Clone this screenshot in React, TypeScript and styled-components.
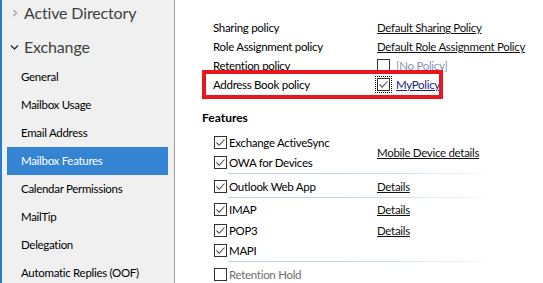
import React from 'react'
import styled, { createGlobalStyle } from 'styled-components'

const GlobalStyle = createGlobalStyle`
  html, body {
    margin: 0;
    padding: 0;
    background: #ffffff;
  }
  body {
    font-family: Lato, 'Noto Sans', sans-serif;
    font-size: 11.5px;
    letter-spacing: -0.3px;
    color: #000000;
  }
`

const navItems = [
  'General',
  'Mailbox Usage',
  'Email Address',
  'Mailbox Features',
  'Calendar Permissions',
  'MailTip',
  'Delegation',
  'Automatic Replies (OOF)'
]

const policies = [
  { label: 'Sharing policy', value: 'Default Sharing Policy', kind: 'link' },
  { label: 'Role Assignment policy', value: 'Default Role Assignment Policy', kind: 'link' },
  { label: 'Retention policy', value: '[No Policy]', kind: 'none' },
  { label: 'Address Book policy', value: 'MyPolicy', kind: 'selected' }
]

type Feature = { name: string; checked: boolean; link?: string }

const featureGroups: { items: Feature[]; link?: string; divider: boolean }[] = [
  {
    items: [
      { name: 'Exchange ActiveSync', checked: true },
      { name: 'OWA for Devices', checked: true }
    ],
    link: 'Mobile Device details',
    divider: true
  },
  {
    items: [{ name: 'Outlook Web App', checked: true, link: 'Details' }],
    divider: true
  },
  {
    items: [
      { name: 'IMAP', checked: true, link: 'Details' },
      { name: 'POP3', checked: true, link: 'Details' },
      { name: 'MAPI', checked: true }
    ],
    divider: true
  },
  {
    items: [{ name: 'Retention Hold', checked: false }],
    divider: false
  }
]

const CheckMark = () => (
  <svg width="11" height="11" viewBox="0 0 11 11">
    <path d="M1.5 5.5 L4.2 8.2 L9.5 2.5" fill="none" stroke="#555555" strokeWidth="1.1" />
  </svg>
)

const ChevronRight = () => (
  <svg width="8" height="8" viewBox="0 0 8 8">
    <path d="M2.5 1 L5.5 4 L2.5 7" fill="none" stroke="#a8a8a8" strokeWidth="1.4" />
  </svg>
)

const ChevronDown = () => (
  <svg width="9" height="8" viewBox="0 0 9 8">
    <path d="M1 2.5 L4.5 6 L8 2.5" fill="none" stroke="#333333" strokeWidth="1.4" />
  </svg>
)

export default function App() {
  return (
    <>
      <GlobalStyle />
      <Window>
        <Sidebar>
          <SectionHeader>
            <ChevronSlot>
              <ChevronRight />
            </ChevronSlot>
            <SectionTitle>Active Directory</SectionTitle>
          </SectionHeader>
          <SectionHeader>
            <ChevronSlot>
              <ChevronDown />
            </ChevronSlot>
            <SectionTitle>Exchange</SectionTitle>
          </SectionHeader>
          <NavList>
            {navItems.map((item) => (
              <NavItem key={item} $active={item === 'Mailbox Features'}>
                {item}
              </NavItem>
            ))}
          </NavList>
        </Sidebar>
        <Content>
          <PolicyTable>
            {policies.map((policy) => (
              <PolicyRow key={policy.label} $marked={policy.kind === 'selected'}>
                <PolicyLabel>{policy.label}</PolicyLabel>
                <PolicyValue>
                  {policy.kind === 'link' && <Link>{policy.value}</Link>}
                  {policy.kind === 'none' && (
                    <>
                      <Checkbox />
                      <Placeholder>{policy.value}</Placeholder>
                    </>
                  )}
                  {policy.kind === 'selected' && (
                    <>
                      <FocusRing>
                        <Checkbox>
                          <CheckMark />
                        </Checkbox>
                      </FocusRing>
                      <Link $visited>{policy.value}</Link>
                    </>
                  )}
                </PolicyValue>
              </PolicyRow>
            ))}
          </PolicyTable>

          <Heading>Features</Heading>

          <FeatureList>
            {featureGroups.map((group, gi) => (
              <FeatureGroup key={gi} $divider={group.divider}>
                <GroupItems>
                  {group.items.map((feature) => (
                    <FeatureRow key={feature.name}>
                      <FeatureName $disabled={!feature.checked}>
                        <Checkbox>{feature.checked && <CheckMark />}</Checkbox>
                        <span>{feature.name}</span>
                      </FeatureName>
                      {feature.link && <Link>{feature.link}</Link>}
                    </FeatureRow>
                  ))}
                </GroupItems>
                {group.link && (
                  <GroupLink>
                    <Link>{group.link}</Link>
                  </GroupLink>
                )}
              </FeatureGroup>
            ))}
          </FeatureList>
        </Content>
      </Window>
    </>
  )
}

const Window = styled.div`
  display: flex;
  width: 543px;
  height: 283px;
  overflow: hidden;
`

const Sidebar = styled.nav`
  flex: 0 0 172px;
  background: #f0f0f0;
  border-left: 2px solid #2b7bd4;
  border-right: 1px solid #a0a0a0;
  box-sizing: content-box;
  display: flex;
  flex-direction: column;
  margin-top: -5px;
  height: 288px;
`

const SectionHeader = styled.div`
  display: flex;
  align-items: center;
  height: 34px;
  flex-shrink: 0;
`

const ChevronSlot = styled.span`
  display: flex;
  justify-content: center;
  width: 9px;
  margin: 1px 5px 0 8px;
`

const SectionTitle = styled.span`
  font-size: 16px;
  letter-spacing: -0.15px;
  color: #404040;
`

const NavList = styled.ul`
  list-style: none;
  margin: 0;
  padding: 0;
`

const NavItem = styled.li<{ $active?: boolean }>`
  display: flex;
  align-items: center;
  height: 28px;
  margin: -0.5px 6px 0.5px 5px;
  padding-left: 14px;
  background: ${(p) => (p.$active ? '#3584d3' : 'transparent')};
  color: ${(p) => (p.$active ? '#ffffff' : '#000000')};
  white-space: nowrap;
`

const Content = styled.main`
  flex: 1;
  padding: 18px 0 0 27px;
  background: #ffffff;
`

const PolicyTable = styled.div`
  display: flex;
  flex-direction: column;
`

const PolicyRow = styled.div<{ $marked?: boolean }>`
  position: relative;
  display: grid;
  grid-template-columns: 164px auto;
  align-items: center;
  height: 19px;
  padding-left: 11px;

  ${(p) =>
    p.$marked &&
    `
    &::after {
      content: '';
      position: absolute;
      top: -5px;
      left: 0;
      width: 233px;
      height: 21px;
      border: 4px solid #e8161e;
      pointer-events: none;
    }
  `}
`

const PolicyLabel = styled.span`
  white-space: nowrap;
`

const PolicyValue = styled.span`
  display: flex;
  align-items: center;
  gap: 6px;
  white-space: nowrap;
`

const Link = styled.span<{ $visited?: boolean }>`
  color: ${(p) => (p.$visited ? '#1b1b86' : '#111111')};
  text-decoration: underline;
  white-space: nowrap;
`

const Placeholder = styled.span`
  color: #8593b4;
`

const Checkbox = styled.span`
  display: inline-flex;
  align-items: center;
  justify-content: center;
  width: 11px;
  height: 11px;
  border: 1px solid #333333;
  background: #ffffff;
  flex-shrink: 0;
`

const FocusRing = styled.span`
  display: inline-flex;
  padding: 1px;
  margin: -2px;
  border: 1px dotted #000000;
`

const Heading = styled.div`
  margin-top: 15px;
  font-weight: bold;
  font-size: 12px;
  letter-spacing: 0;
  height: 17px;
  display: flex;
  align-items: center;
`

const FeatureList = styled.div`
  display: flex;
  flex-direction: column;
  margin-top: 6px;
  padding-left: 12px;
`

const FeatureGroup = styled.div<{ $divider?: boolean }>`
  display: grid;
  grid-template-columns: 163px auto;
  align-items: center;
  padding-bottom: ${(p) => (p.$divider ? '1px' : '0')};
  margin-bottom: 2px;
  background-image: ${(p) =>
    p.$divider
      ? 'linear-gradient(to right, #b6cde8 0%, #c9dbef 55%, #ffffff 100%)'
      : 'none'};
  background-size: 274px 1px;
  background-position: 14px 100%;
  background-repeat: no-repeat;
`

const GroupItems = styled.div`
  grid-column: 1 / 3;
  grid-row: 1;
  display: flex;
  flex-direction: column;
`

const GroupLink = styled.div`
  grid-column: 2;
  grid-row: 1;
  align-self: center;
`

const FeatureRow = styled.div`
  display: grid;
  grid-template-columns: 163px auto;
  align-items: center;
  height: 20.5px;
`

const FeatureName = styled.span<{ $disabled?: boolean }>`
  display: flex;
  align-items: center;
  gap: 2px;
  white-space: nowrap;
  color: ${(p) => (p.$disabled ? '#6d6d6d' : '#000000')};
`
